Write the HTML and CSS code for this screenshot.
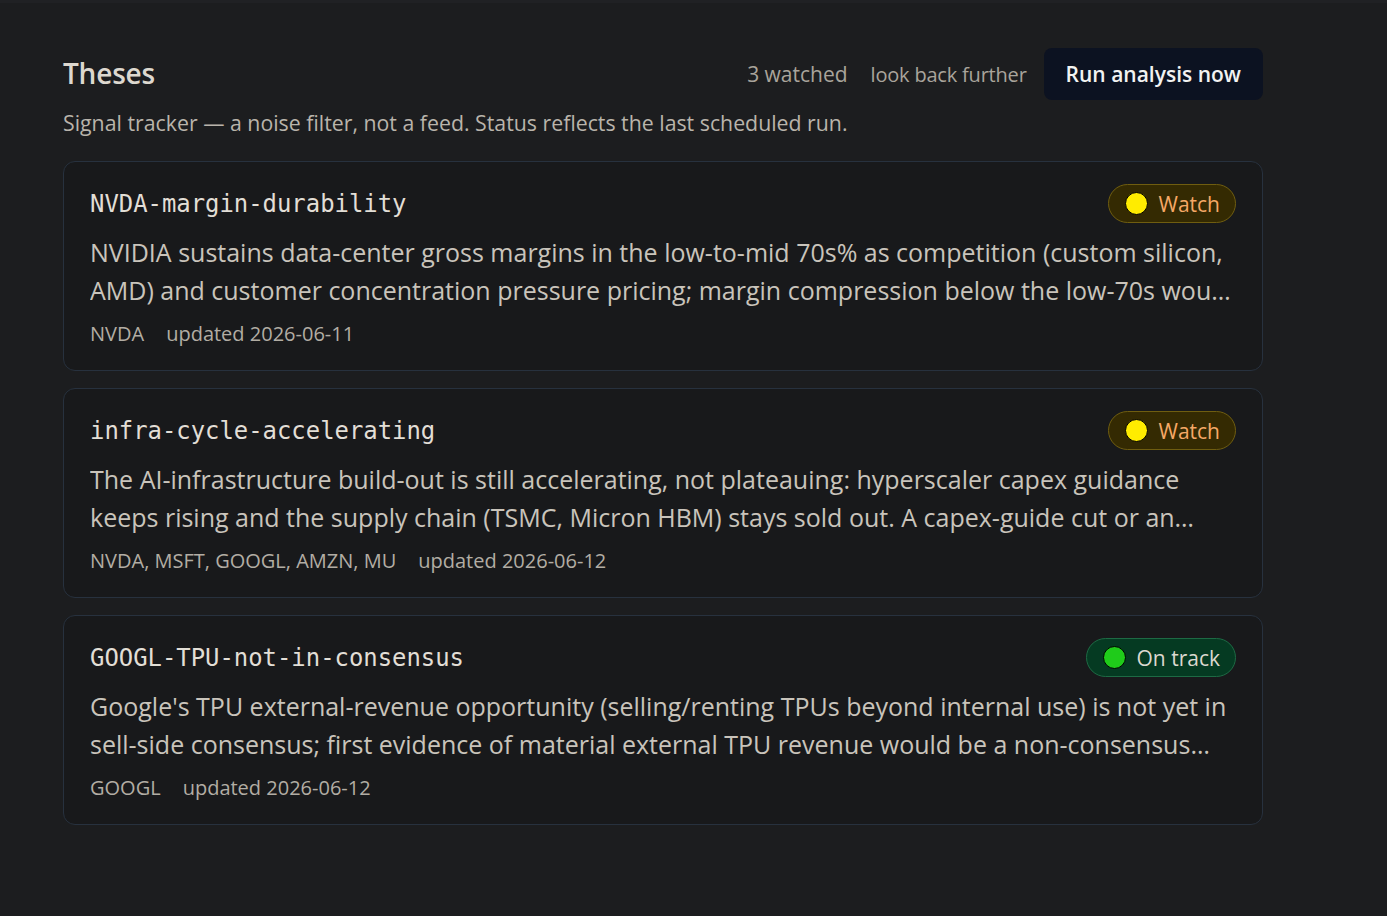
FILE: index.html
```html
<!DOCTYPE html>
<html lang="en">
<head>
<meta charset="utf-8">
<title>Theses</title>
<link rel="stylesheet" href="styles.css">
</head>
<body>
<div class="topstrip"></div>
<main class="page">
  <header class="head">
    <h1 class="title">Theses</h1>
    <div class="actions">
      <span class="count">3 watched</span>
      <button class="link-btn">look back further</button>
      <button class="run-btn">Run analysis now</button>
    </div>
  </header>
  <p class="subtitle">Signal tracker — a noise filter, not a feed. Status reflects the last scheduled run.</p>

  <section class="list">
    <article class="card">
      <div class="card-top">
        <h2 class="card-name">NVDA-margin-durability</h2>
        <span class="badge badge-watch"><span class="dot dot-yellow"></span>Watch</span>
      </div>
      <p class="desc">NVIDIA sustains data-center gross margins in the low-to-mid 70s% as competition (custom silicon, AMD) and customer concentration pressure pricing; margin compression below the low-70s would signal that pricing power is eroding faster than expected.</p>
      <div class="meta"><span>NVDA</span><span>updated 2026-06-11</span></div>
    </article>

    <article class="card">
      <div class="card-top">
        <h2 class="card-name">infra-cycle-accelerating</h2>
        <span class="badge badge-watch"><span class="dot dot-yellow"></span>Watch</span>
      </div>
      <p class="desc">The AI-infrastructure build-out is still accelerating, not plateauing: hyperscaler capex guidance keeps rising and the supply chain (TSMC, Micron HBM) stays sold out. A capex-guide cut or an inventory build would break the thesis.</p>
      <div class="meta"><span>NVDA, MSFT, GOOGL, AMZN, MU</span><span>updated 2026-06-12</span></div>
    </article>

    <article class="card">
      <div class="card-top">
        <h2 class="card-name">GOOGL-TPU-not-in-consensus</h2>
        <span class="badge badge-ok"><span class="dot dot-green"></span>On track</span>
      </div>
      <p class="desc">Google's TPU external-revenue opportunity (selling/renting TPUs beyond internal use) is not yet in sell-side consensus; first evidence of material external TPU revenue would be a non-consensus catalyst for the stock.</p>
      <div class="meta"><span>GOOGL</span><span>updated 2026-06-12</span></div>
    </article>
  </section>
</main>
</body>
</html>
```

FILE: styles.css
```css
* { box-sizing: border-box; }
html, body {
  margin: 0;
  padding: 0;
  background: #1c1d1f;
}
body {
  font-family: "Open Sans", "Noto Sans", "Liberation Sans", sans-serif;
  color: #c9c4bb;
  min-height: 916px;
}
.topstrip {
  height: 3px;
  background: #202124;
}
.page {
  width: 1263px;
  padding: 45px 0 40px 63px;
}
.head {
  display: flex;
  align-items: center;
  justify-content: space-between;
  height: 52px;
}
.title {
  margin: 0;
  font-size: 28px;
  font-weight: 600;
  color: #ddd8cf;
  letter-spacing: -0.2px;
  position: relative;
  top: -1px;
}
.actions {
  display: flex;
  align-items: center;
}
.count {
  font-size: 21px;
  color: #a9a49b;
  margin-right: 23px;
}
.link-btn {
  background: none;
  border: none;
  padding: 0;
  font: inherit;
  font-size: 20px;
  letter-spacing: -0.2px;
  color: #a9a49b;
  margin-right: 17px;
  cursor: pointer;
}
.run-btn {
  height: 52px;
  padding: 0 22px;
  border: none;
  border-radius: 8px;
  background: #0c1221;
  color: #f2f2f2;
  font: inherit;
  font-size: 21px;
  font-weight: 600;
  cursor: pointer;
}
.subtitle {
  margin: 8px 0 0;
  font-size: 21.3px;
  line-height: 30px;
  color: #b9b4ab;
}
.list {
  margin-top: 23px;
  display: flex;
  flex-direction: column;
  gap: 17px;
}
.card {
  background: #18191b;
  border: 1px solid #27313e;
  border-radius: 12px;
  padding: 22px 26px 21px 26px;
}
.card-top {
  display: flex;
  align-items: center;
  justify-content: space-between;
  height: 39px;
}
.card-name {
  margin: 0;
  font-family: "DejaVu Sans Mono", "Liberation Mono", monospace;
  font-size: 23.9px;
  font-weight: 400;
  color: #e2ded6;
}
.badge {
  display: inline-flex;
  align-items: center;
  height: 39px;
  padding: 0 15px 0 16px;
  border-radius: 999px;
  font-size: 21px;
  font-weight: 500;
  gap: 11px;
}
.badge-watch {
  background: #342a02;
  border: 1px solid #6f5d10;
  color: #f5a866;
}
.badge-ok {
  background: #053a22;
  border: 1px solid #1d6a44;
  color: #dcd8cf;
}
.dot {
  width: 23px;
  height: 23px;
  border-radius: 50%;
  border: 1.5px solid #000;
  flex: none;
}
.dot-yellow { background: #ffec00; }
.dot-green { background: #1fcb1a; }
.desc {
  margin: 10px 0 0;
  font-size: 25px;
  line-height: 38px;
  color: #c9c4bb;
  display: -webkit-box;
  -webkit-line-clamp: 2;
  -webkit-box-orient: vertical;
  overflow: hidden;
}
.meta {
  margin-top: 10px;
  display: flex;
  gap: 22px;
  font-size: 20px;
  line-height: 30px;
  color: #b2ada4;
}
```
